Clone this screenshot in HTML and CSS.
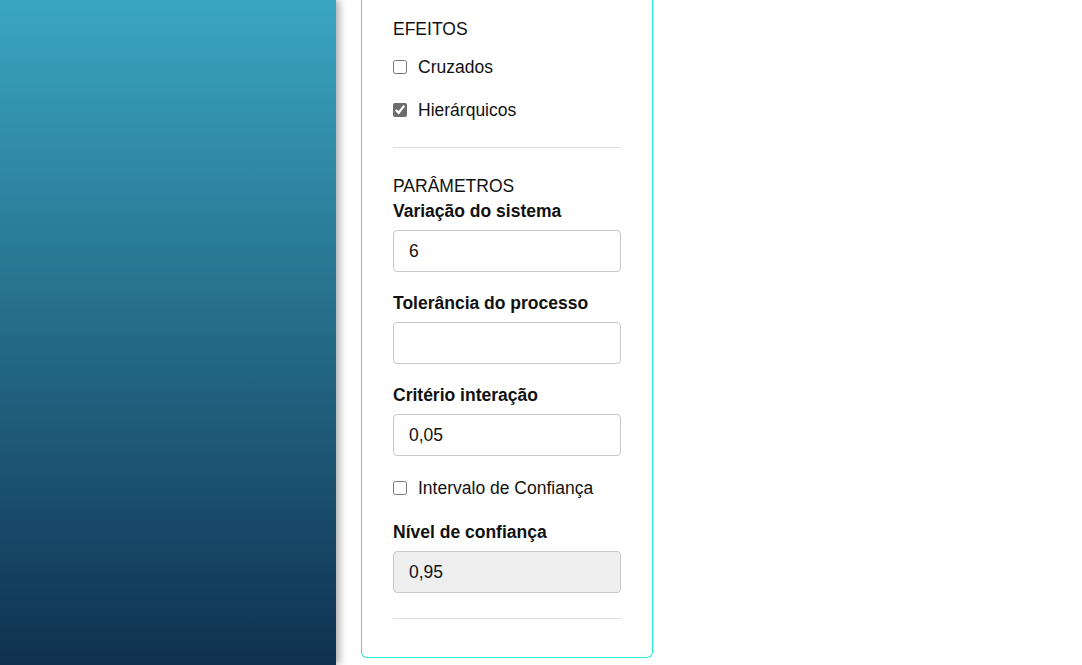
FILE: index.html
```html
<!DOCTYPE html>
<html lang="pt">
<head>
  <meta charset="UTF-8">
  <title>Parâmetros</title>
  <link rel="stylesheet" href="styles.css">
</head>
<body>

  <div class="layout">
    <aside class="sidebar"></aside>

    <main class="content">
      <div class="panel">

        <h3 class="section-title">EFEITOS</h3>
        <label class="check first">
          <input type="checkbox"> Cruzados
        </label>
        <label class="check">
          <input type="checkbox" checked> Hierárquicos
        </label>

        <hr>

        <h3 class="section-title params">PARÂMETROS</h3>

        <div class="field">
          <label for="variacao">Variação do sistema</label>
          <input type="text" id="variacao" value="6">
        </div>

        <div class="field">
          <label for="tolerancia">Tolerância do processo</label>
          <input type="text" id="tolerancia" value="">
        </div>

        <div class="field">
          <label for="criterio">Critério interação</label>
          <input type="text" id="criterio" value="0,05">
        </div>

        <label class="check interval">
          <input type="checkbox"> Intervalo de Confiança
        </label>

        <div class="field">
          <label for="nivel">Nível de confiança</label>
          <input type="text" id="nivel" value="0,95" disabled>
        </div>

        <hr class="last">

      </div>
    </main>
  </div>

</body>
</html>
```

FILE: styles.css
```css
html, body {
  margin: 0;
  height: 100%;
}

body {
  font-family: 'Liberation Sans', Arial, sans-serif;
  font-size: 17.5px;
  color: #111;
  background: white;
  overflow: hidden;
}

.layout {
  display: flex;
  height: 100%;
}

.sidebar {
  width: 336px;
  flex-shrink: 0;
  background: linear-gradient(180deg, #3aa6c1, #0f3150);
  box-shadow: 3px 0 8px rgba(0, 0, 0, 0.35);
  position: relative;
  z-index: 1;
}

.content {
  padding-left: 25px;
}

.panel {
  width: 228px;
  padding: 18px 31px 38px;
  border: 1px solid #27ebd0;
  border-top: none;
  border-radius: 0 0 6px 6px;
}

.section-title {
  margin: 0;
  font-size: 17.5px;
  font-weight: normal;
  line-height: 22px;
}

.section-title.params {
  margin-bottom: 3px;
}

.check {
  display: flex;
  align-items: center;
  gap: 11px;
  line-height: 22px;
  margin-top: 21px;
}

.check.first {
  margin-top: 16px;
}

.check.interval {
  margin-top: 21px;
  margin-bottom: 22px;
}

.check input {
  margin: 0;
  width: 14px;
  height: 14px;
  accent-color: #6d6d6d;
}

hr {
  border: none;
  border-top: 1px solid #dcdcdc;
  margin: 26px 0 27px;
}

hr.last {
  margin: 25px 0 0;
}

.field {
  margin-bottom: 20px;
}

.field label {
  display: block;
  font-weight: bold;
  line-height: 22px;
  margin-bottom: 8px;
}

.field input {
  display: block;
  box-sizing: border-box;
  width: 100%;
  height: 42px;
  padding: 0 15px;
  font-family: inherit;
  font-size: 17.5px;
  color: #111;
  border: 1px solid #c8c8c8;
  border-radius: 4px;
  background: white;
  outline: none;
}

.field input:disabled {
  background: #eeeeee;
}

.field:last-of-type {
  margin-bottom: 0;
}
```
